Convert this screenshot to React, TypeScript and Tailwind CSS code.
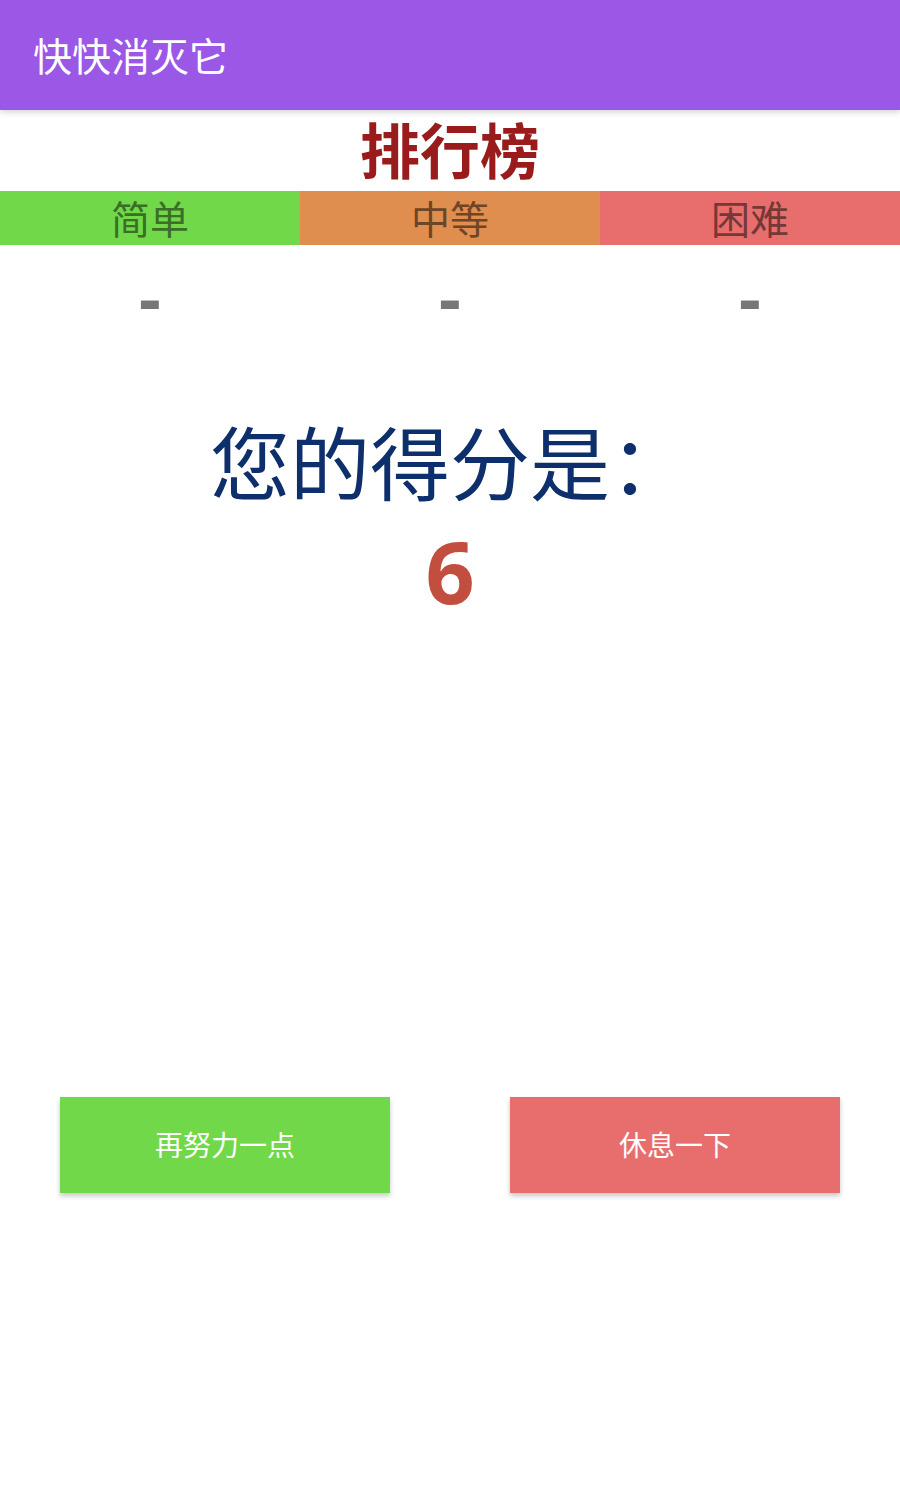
const cjk = "font-['Noto_Sans','Noto_Sans_CJK_SC',sans-serif]";

const levels = [
  { name: "简单", bg: "bg-[#71d84a]", text: "text-[#3b6e27]" },
  { name: "中等", bg: "bg-[#e08e4f]", text: "text-[#6e4526]" },
  { name: "困难", bg: "bg-[#e86e6d]", text: "text-[#743837]" },
];

export default function App() {
  return (
    <div className={`relative flex h-[1500px] w-[900px] flex-col bg-white ${cjk}`}>
      <header className="relative z-10 flex h-[110px] items-center bg-[#9b57e6] px-[33px] shadow-[0_2px_6px_rgba(0,0,0,0.18)]">
        <h1 className="text-[39px] leading-none text-white">快快消灭它</h1>
      </header>

      <h2 className="mt-[2px] text-center text-[60px] font-bold leading-[79px] text-[#991b1b]">
        排行榜
      </h2>

      <div className="grid grid-cols-3">
        {levels.map((l) => (
          <div
            key={l.name}
            className={`flex h-[54px] items-center justify-center text-[39px] leading-none ${l.bg} ${l.text}`}
          >
            {l.name}
          </div>
        ))}
      </div>

      <div className="mt-[22px] grid grid-cols-3">
        {levels.map((l) => (
          <div
            key={l.name}
            className="text-center text-[68px] font-bold leading-[60px] text-[#777777]"
          >
            -
          </div>
        ))}
      </div>

      <div className="mt-[88px] text-center text-[80px] leading-[96px] text-[#0d2f6b]">
        您的得分是：
      </div>
      <div className="mt-[5px] text-center text-[86px] font-bold leading-[110px] text-[#c24e3f]">
        6
      </div>

      <div className="mt-[471px] flex justify-between px-[60px]">
        <button className="flex h-[96px] w-[330px] items-center justify-center bg-[#71d84a] text-[28px] text-white shadow-[0_3px_5px_rgba(0,0,0,0.22)]">
          再努力一点
        </button>
        <button className="flex h-[96px] w-[330px] items-center justify-center bg-[#e86e6d] text-[28px] text-white shadow-[0_3px_5px_rgba(0,0,0,0.22)]">
          休息一下
        </button>
      </div>
    </div>
  );
}
